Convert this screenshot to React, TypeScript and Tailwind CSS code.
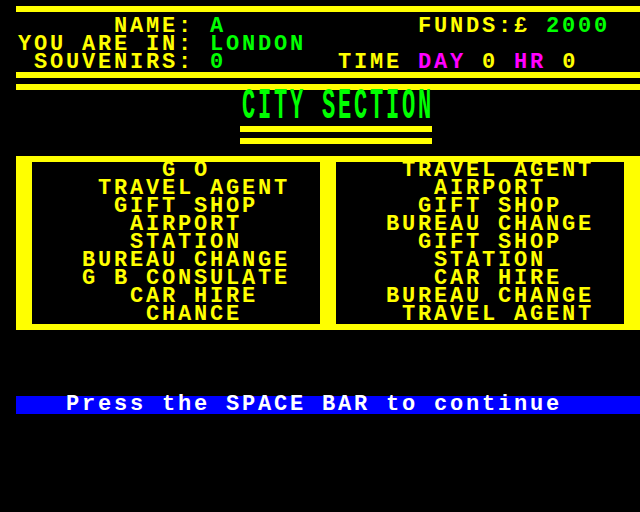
const Y = "text-[#ffff00]";
const G = "text-[#00ff00]";
const M = "text-[#ff00ff]";

const leftItems = [
  "        G O",
  "    TRAVEL AGENT",
  "     GIFT SHOP",
  "      AIRPORT",
  "      STATION",
  "   BUREAU CHANGE",
  "   G B CONSULATE",
  "      CAR HIRE",
  "       CHANCE",
];

const rightItems = [
  "    TRAVEL AGENT",
  "      AIRPORT",
  "     GIFT SHOP",
  "   BUREAU CHANGE",
  "     GIFT SHOP",
  "      STATION",
  "      CAR HIRE",
  "   BUREAU CHANGE",
  "    TRAVEL AGENT",
];

function Line({ children, className = "" }: { children: React.ReactNode; className?: string }) {
  return (
    <div className={`h-[18px] whitespace-pre leading-[18px] ${className}`}>
      <span className="block pl-[2px]">{children}</span>
    </div>
  );
}

function Panel({ items }: { items: string[] }) {
  return (
    <div className="w-[288px] bg-black">
      {items.map((t, i) => (
        <Line key={i} className={Y}>
          {t}
        </Line>
      ))}
    </div>
  );
}

export default function App() {
  return (
    <div
      className="w-[640px] h-[512px] bg-black overflow-hidden font-bold text-[22px] tracking-[2.8px]"
      style={{ fontFamily: '"Liberation Mono", monospace' }}
    >
      {/* row 0 */}
      <div className="h-[18px] pt-[6px] pl-4">
        <div className="h-[6px] bg-[#ffff00]" />
      </div>

      <Line className={Y}>
        {"       NAME: "}
        <span className={G}>A</span>
        {"            FUNDS:£ "}
        <span className={G}>2000</span>
      </Line>
      <Line className={Y}>
        {" YOU ARE IN: "}
        <span className={G}>LONDON</span>
      </Line>
      <Line className={Y}>
        {"  SOUVENIRS: "}
        <span className={G}>0</span>
        {"       TIME "}
        <span className={M}>DAY</span>
        {" 0 "}
        <span className={M}>HR</span>
        {" 0"}
      </Line>

      {/* row 4 */}
      <div className="h-[18px] pl-4 flex flex-col justify-between">
        <div className="h-[6px] bg-[#ffff00]" />
        <div className="h-[6px] bg-[#ffff00]" />
      </div>

      {/* rows 5-6 double height */}
      <div className="h-[36px] whitespace-pre leading-[18px] text-[#00ff00]">
        <span className="block origin-top scale-y-[2] pl-[2px]">
          {"               CITY SECTION"}
        </span>
      </div>

      {/* row 7 */}
      <div className="h-[18px] pl-[240px] flex flex-col justify-between">
        <div className="w-[192px] h-[6px] bg-[#ffff00]" />
        <div className="w-[192px] h-[6px] bg-[#ffff00]" />
      </div>

      <div className="h-[12px]" />

      {/* box */}
      <div className="ml-4 bg-[#ffff00] py-[6px] px-4 flex gap-4">
        <Panel items={leftItems} />
        <Panel items={rightItems} />
      </div>

      <div className="h-[66px]" />

      <div className="ml-4 bg-[#0000ff]">
        <Line className="text-white">{"   Press the SPACE BAR to continue"}</Line>
      </div>
    </div>
  );
}
